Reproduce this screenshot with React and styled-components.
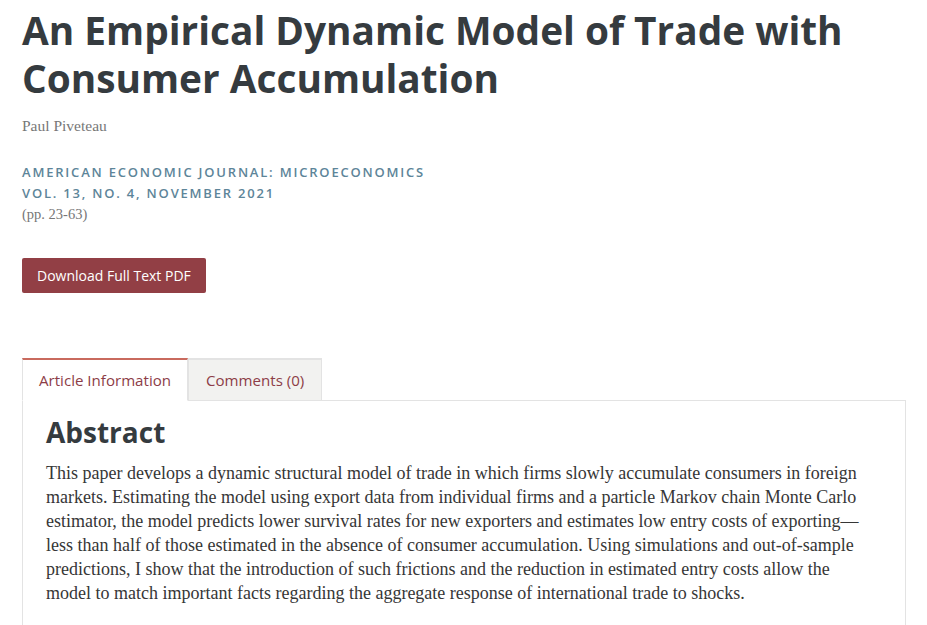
import styled, { createGlobalStyle } from 'styled-components';

const abstractText =
  'This paper develops a dynamic structural model of trade in which firms slowly accumulate consumers in foreign markets. Estimating the model using export data from individual firms and a particle Markov chain Monte Carlo estimator, the model predicts lower survival rates for new exporters and estimates low entry costs of exporting\u2014less than half of those estimated in the absence of consumer accumulation. Using simulations and out-of-sample predictions, I show that the introduction of such frictions and the reduction in estimated entry costs allow the model to match important facts regarding the aggregate response of international trade to shocks.';

const GlobalStyle = createGlobalStyle`
  body {
    margin: 0;
    background: #fff;
    font-family: "Open Sans", sans-serif;
    overflow: hidden;
  }
`;

const App = () => {
  return (
    <>
      <GlobalStyle />
      <Page>
        <Title>An Empirical Dynamic Model of Trade with Consumer Accumulation</Title>
        <Author>Paul Piveteau</Author>
        <Journal>
          <JournalLine>American Economic Journal: Microeconomics</JournalLine>
          <JournalLine>vol. 13, no. 4, November 2021</JournalLine>
          <Pages>(pp. 23-63)</Pages>
        </Journal>
        <DownloadButton href='#'>Download Full Text PDF</DownloadButton>
        <Tabs>
          <Tab $active>Article Information</Tab>
          <Tab>Comments (0)</Tab>
        </Tabs>
        <Panel>
          <PanelHeading>Abstract</PanelHeading>
          <AbstractBody>{abstractText}</AbstractBody>
        </Panel>
      </Page>
    </>
  );
};

export default App;

const Page = styled.div`
  padding: 6px 21px 0 22px;
`;

const Title = styled.h1`
  margin: 0;
  font-family: "Open Sans", sans-serif;
  font-weight: 700;
  font-size: 38.8px;
  line-height: 48px;
  color: #353b3f;
  max-width: 860px;
`;

const Author = styled.div`
  margin-top: 14px;
  font-family: "Liberation Serif", serif;
  font-size: 15.5px;
  line-height: 20px;
  color: #777;
`;

const Journal = styled.div`
  margin-top: 26px;
`;

const JournalLine = styled.div`
  font-family: "Open Sans", sans-serif;
  font-weight: 600;
  font-size: 13px;
  line-height: 21px;
  letter-spacing: 1.8px;
  text-transform: uppercase;
  color: #5d8599;
`;

const Pages = styled.div`
  font-family: "Liberation Serif", serif;
  font-size: 14.5px;
  line-height: 20px;
  color: #777;
`;

const DownloadButton = styled.a`
  display: inline-block;
  margin-top: 34px;
  padding: 0 15px;
  height: 35px;
  line-height: 35px;
  background: #923f45;
  color: #fff;
  border-radius: 2px;
  font-family: "Open Sans", sans-serif;
  font-size: 14px;
  text-decoration: none;
`;

const Tabs = styled.div`
  display: flex;
  margin-top: 65px;
`;

const Tab = styled.div`
  height: 40px;
  padding: 0 ${({ $active }) => ($active ? '16px' : '17px')};
  display: flex;
  align-items: center;
  font-family: "Open Sans", sans-serif;
  font-size: 15.1px;
  color: #8d3d47;
  background: ${({ $active }) => ($active ? '#fff' : '#f2f2f0')};
  border: 1px solid #e3e3e3;
  border-top: 2px solid ${({ $active }) => ($active ? '#c96a5e' : '#e3e3e3')};
  border-bottom: ${({ $active }) => ($active ? '1px solid #fff' : '1px solid #e3e3e3')};
  margin-bottom: -1px;
  position: relative;
  z-index: 1;
`;

const Panel = styled.div`
  border: 1px solid #e3e3e3;
  border-bottom: none;
  padding: 14px 23px 30px;
`;

const PanelHeading = styled.h2`
  margin: 0;
  font-family: "Open Sans", sans-serif;
  font-weight: 700;
  font-size: 28px;
  line-height: 34px;
  color: #353b3f;
`;

const AbstractBody = styled.p`
  margin: 12px 0 0;
  font-family: "Liberation Serif", serif;
  font-size: 18px;
  line-height: 24px;
  color: #363636;
  max-width: 822px;
`;
